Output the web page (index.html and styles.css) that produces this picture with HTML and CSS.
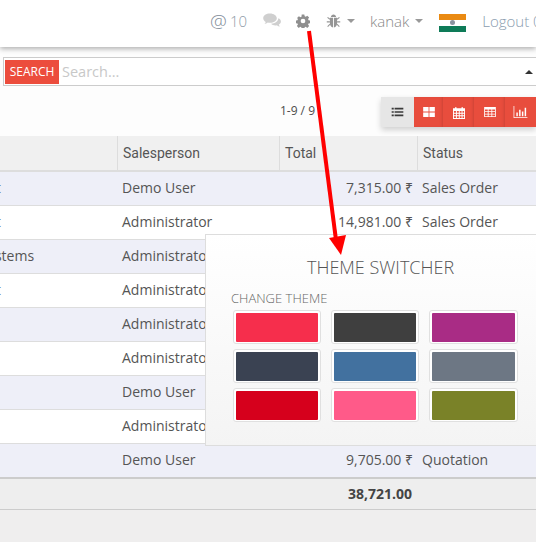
FILE: index.html
```html
<!DOCTYPE html>
<html lang="en">
<head>
<meta charset="utf-8">
<title>Sales Orders</title>
<link rel="stylesheet" href="styles.css">
</head>
<body>
<header class="topbar">
  <span class="at">@</span><span class="count">10</span>
  <svg class="ico ico-comments" viewBox="0 0 18 15"><path d="M7 0.5C3.2 0.5 0.2 2.6 0.2 5.2c0 1.5 1 2.8 2.5 3.7-.2.9-.7 1.6-1.3 2.2 1.3-.2 2.5-.8 3.4-1.5.7.1 1.4.2 2.2.2 3.8 0 6.8-2.1 6.8-4.6S10.800.5 7 .5z"/><path d="M15.300 5.300c.1 3-3.200 5.400-7.200 5.500.9 1 2.500 1.600 4.300 1.600.5 0 1-.1 1.500-.2.800.7 1.800 1.200 3 1.400-.5-.6-.9-1.200-1.100-2 1.300-.8 2.100-1.900 2.100-3.100 0-1.500-1-2.600-2.600-3.200z"/></svg>
  <svg class="ico ico-gear" viewBox="0 0 16 16"><path fill-rule="evenodd" d="M6.500.5h3l.4 2.100 1.200.5 1.800-1.200 2.100 2.100-1.200 1.800.5 1.200 2.100.4v3l-2.100.4-.5 1.200 1.200 1.800-2.100 2.100-1.800-1.200-1.200.5-.4 2.100h-3l-.4-2.100-1.200-.5-1.800 1.200-2.100-2.100 1.200-1.800-.5-1.200-2.100-.4v-3l2.100-.4.5-1.200L1.200 4.600l2.100-2.100 1.800 1.200 1.200-.5zM8 5.300a2.700 2.700 0 1 0 0 5.400 2.700 2.700 0 0 0 0-5.400z"/></svg>
  <svg class="ico ico-bug" viewBox="0 0 17 16"><path d="M5.500 3.300C5.700 1.700 7 .6 8.500.6s2.800 1.100 3 2.700zM4.400 4.200h3.600V15.400C5.700 15.100 4.400 13 4.400 10.500zM9 4.200h3.600v6.300c0 2.500-1.300 4.600-3.600 4.900z"/><path class="bug-legs" d="M4.400 6 1.700 3.800M12.600 6l2.700-2.200M4.400 9H.8M12.600 9h3.600M4.600 11.500 1.800 14.300M12.400 11.500l2.800 2.800"/></svg>
  <span class="caret caret-bug"></span>
  <span class="user">kanak</span>
  <span class="caret caret-user"></span>
  <span class="flag"><span class="flag-saffron"></span><span class="flag-white"><span class="chakra"></span></span><span class="flag-green"></span></span>
  <span class="logout">Logout 0</span>
</header>

<div class="workbar">
  <section class="searchbox">
    <span class="facet">SEARCH</span>
    <span class="placeholder">Search...</span>
    <span class="caret-up"></span>
  </section>

  <section class="controls">
    <span class="pager">1-9 / 9</span>
    <div class="views">
      <button class="view view-active"><svg class="vico vico-list" viewBox="0 0 14 12"><path class="list-dark" d="M0 1h2.500v2H0zM0 5h2.500v2H0zM0 9h2.500v2H0zM3.500 1H14v2H3.500zM3.500 5H14v2H3.500zM3.500 9H14v2H3.500z"/></svg></button>
      <button class="view view-kanban"><svg class="vico" viewBox="0 0 14 12"><path d="M0 0h6.500v5.500H0zM7.500 0H14v5.500H7.500zM0 6.500h6.500V12H0zM7.500 6.500H14V12H7.500z"/></svg></button>
      <button class="view view-cal"><svg class="vico vico-cal" viewBox="0 0 13 14"><path fill-rule="evenodd" d="M0 2.500h2.200V1.200h1.600v1.300h5.400V1.200h1.600v1.300H13V14H0zM1 5.500v1.800h2.200V5.500zm3.200 0v1.800h2.100V5.500zm3.100 0v1.800h2V5.500zm3 0v1.800H12V5.500zM1 8.300v1.800h2.200V8.300zm3.200 0v1.800h2.100V8.300zm3.100 0v1.800h2V8.300zm3 0v1.800H12V8.300zM1 11.100V13h2.200v-1.900zm3.200 0V13h2.100v-1.900zm3.100 0V13h2v-1.900zm3 0V13H12v-1.900z"/></svg></button>
      <button class="view view-grid"><svg class="vico vico-grid" viewBox="0 0 14 12"><path fill-rule="evenodd" d="M0 0h14v12H0zM1 3v2h3.300V3zm4.300 0v2h3.400V3zm4.400 0v2H13V3zM1 6v2h3.300V6zm4.300 0v2h3.400V6zm4.400 0v2H13V6zM1 9v2h3.300V9zm4.300 0v2h3.400V9zm4.400 0v2H13V9z"/></svg></button>
      <button class="view view-chart"><svg class="vico vico-chart" viewBox="0 0 15 13"><path d="M0 0h.8v12.200H15v.8H0zM3 7h1.600v4.200H3zM6 4h1.600v7.200H6zM9 6h1.600v5.200H9zM12 2h1.600v9.200H12z"/></svg></button>
    </div>
  </section>
</div>

<table class="orders">
  <colgroup><col class="c-cust"><col class="c-sales"><col class="c-total"><col class="c-status"></colgroup>
  <thead>
    <tr><th></th><th>Salesperson</th><th>Total</th><th>Status</th></tr>
  </thead>
  <tbody>
    <tr><td class="cust">China Export</td><td>Demo User</td><td class="num">7,315.00 ₹</td><td>Sales Order</td></tr>
    <tr><td class="cust">China Export</td><td>Administrator</td><td class="num">14,981.00 ₹</td><td>Sales Order</td></tr>
    <tr><td class="cust">Think Big Systems</td><td>Administrator</td><td class="num"></td><td></td></tr>
    <tr><td class="cust">China Export</td><td>Administrator</td><td class="num"></td><td></td></tr>
    <tr><td class="cust"></td><td>Administrator</td><td class="num"></td><td></td></tr>
    <tr><td class="cust"></td><td>Administrator</td><td class="num"></td><td></td></tr>
    <tr><td class="cust"></td><td>Demo User</td><td class="num"></td><td></td></tr>
    <tr><td class="cust"></td><td>Administrator</td><td class="num"></td><td></td></tr>
    <tr class="last"><td class="cust"></td><td>Demo User</td><td class="num">9,705.00 ₹</td><td>Quotation</td></tr>
  </tbody>
  <tfoot>
    <tr><td></td><td></td><td class="num sum">38,721.00</td><td></td></tr>
  </tfoot>
</table>

<aside class="switcher">
  <h2 class="switcher-title">THEME SWITCHER</h2>
  <h3 class="switcher-label">CHANGE THEME</h3>
  <div class="swatches">
    <span class="swatch"><span class="fill t-rose"></span></span>
    <span class="swatch"><span class="fill t-charcoal"></span></span>
    <span class="swatch"><span class="fill t-purple"></span></span>
    <span class="swatch"><span class="fill t-slate"></span></span>
    <span class="swatch"><span class="fill t-blue"></span></span>
    <span class="swatch"><span class="fill t-grey"></span></span>
    <span class="swatch"><span class="fill t-red"></span></span>
    <span class="swatch"><span class="fill t-pink"></span></span>
    <span class="swatch"><span class="fill t-olive"></span></span>
  </div>
</aside>

<svg class="arrow" viewBox="0 0 536 542"><path class="arrow-line" d="M309 31 336 240"/><path class="arrow-head" d="M329 238 346 235 341 255z"/></svg>
</body>
</html>
```
FILE: styles.css
```css
* { box-sizing: border-box; }
html, body { margin: 0; height: 100%; }
body {
  width: 536px;
  height: 542px;
  overflow: hidden;
  position: relative;
  background: #efeeee;
  font-family: "Open Sans", "Noto Sans", sans-serif;
  font-size: 14px;
  color: #555;
}

/* top bar */
.topbar {
  height: 47px;
  background: #fff;
  box-shadow: 0 2px 5px rgba(0,0,0,.3);
  display: flex;
  align-items: center;
  padding-left: 210px;
  padding-bottom: 6px;
  color: #999;
  white-space: nowrap;
  overflow: hidden;
  position: relative;
  z-index: 1;
}
.topbar > * { flex: none; }
.at { font-size: 19px; font-weight: 300; color: #7f8c98; width: 20px; }
.count { font-size: 15px; font-weight: 300; color: #8f9ca8; width: 33px; }
.ico { display: block; }
.ico-comments { width: 18px; height: 15px; fill: #cfcfcf; }
.ico-gear { width: 14px; height: 14px; margin-left: 15px; fill: #8f8f8f; }
.ico-bug { width: 15px; height: 14px; margin-left: 16px; fill: #959595; }
.bug-legs { fill: none; stroke: #959595; stroke-width: 1.200; }
.caret { width: 0; height: 0; border: 4px solid transparent; border-top-color: #999; border-bottom-width: 0; }
.caret-bug { margin-left: 6px; }
.caret-user { margin-left: 6px; }
.user { font-size: 15px; font-weight: 300; margin-left: 15px; color: #888; }
.flag { width: 27px; height: 18px; margin: 4px 0 0 16px; display: flex; flex-direction: column; }
.flag-saffron { height: 6px; background: #ea8a12; }
.flag-white { height: 6px; background: #fff; display: flex; justify-content: center; align-items: center; }
.chakra { width: 5px; height: 5px; border-radius: 50%; background: #8a93a0; }
.flag-green { height: 6px; background: #0e7b58; }
.logout { font-size: 15px; font-weight: 300; margin-left: 16px; color: #8a9cae; }

/* search and controls band */
.workbar { height: 89px; padding-top: 10px; background: #fdfdfd; }
.searchbox {
  margin-left: 3px;
  height: 29px;
  width: 540px;
  border: 1px solid #ccc;
  background: #fff;
  display: flex;
  align-items: center;
  padding-left: 1px;
}
.facet {
  width: 54px; height: 24px;
  background: #ec4d3d;
  color: #fff;
  font-size: 12px;
  display: flex; align-items: center; justify-content: center;
}
.placeholder { margin-left: 3px; color: #c8c8c8; font-size: 14.500px; }
.caret-up {
  margin-left: auto; margin-right: 9px;
  width: 0; height: 0;
  border: 4.500px solid transparent;
  border-bottom-color: #333;
  border-top-width: 0;
}

/* pager + view buttons */
.controls {
  margin-top: 11px;
  height: 30px;
  display: flex;
  align-items: center;
  justify-content: flex-end;
}
.pager { font-size: 12px; color: #4c4c4c; margin: 0 66px 3px 0; }
.views { display: flex; height: 30px; box-shadow: 0 3px 6px rgba(0,0,0,.18); width: 155px; flex: none; }
.view { border: 0; padding: 0; margin: 0; display: flex; align-items: center; justify-content: center; background: #e84d3d; flex: none; height: 30px; box-shadow: inset -2px 0 3px -1px rgba(0,0,0,.12); }
.view-active { width: 33px; background: #e6e6e6; box-shadow: none; }
.view-kanban { width: 29px; }
.view-cal { width: 31px; }
.view-grid { width: 31px; }
.view-chart { width: 31px; box-shadow: none; }
.vico { width: 12px; height: 10px; fill: #fff; display: block; }
.vico-list { width: 13px; }
.vico-cal { height: 13px; }
.vico-grid { width: 12px; }
.vico-chart { width: 15px; height: 12px; }
.list-dark { fill: #3a3a3a; }

/* table */
.orders {
  width: 756px;
  margin-left: -220px;
  table-layout: fixed;
  border-collapse: separate;
  border-spacing: 0;
  background: #fff;
}
.c-cust { width: 337px; }
.c-sales { width: 162px; }
.c-total { width: 138px; }
.c-status { width: 119px; }
.orders th {
  height: 36px;
  background: #f0f0f0;
  font-family: Roboto, sans-serif;
  font-weight: 400;
  font-size: 14px;
  text-align: left;
  padding: 0 5px;
  border-bottom: 2px solid #ddd;
  border-left: 1px solid #ddd;
  color: #555;
}
.orders th:first-child { border-left: 0; }
.orders td {
  height: 34px;
  padding: 0 5px 2px;
  border-bottom: 1px solid #ddd;
  white-space: nowrap;
  overflow: hidden;
}
.orders tbody tr:nth-child(odd) { background: #eeeff8; }
.orders tbody tr.last td { height: 33px; border-bottom: 0; }
.orders td.cust { padding-left: 137px; }
.orders td.num { text-align: right; padding-right: 4px; }
.orders td.num.sum { padding-right: 5px; font-weight: 700; color: #444; }
.orders tfoot tr { background: #eee; }
.orders tfoot td { height: 33px; border-top: 2px solid #ccc; border-bottom: 1px solid #ccc; }

/* theme switcher */
.switcher {
  position: absolute;
  left: 205px;
  top: 234px;
  width: 340px;
  height: 212px;
  background: linear-gradient(#fff, #f4f4f4);
  border: 1px solid #ddd;
  padding-left: 25px;
  z-index: 2;
}
.switcher-title {
  margin: 21px 0 0 76px;
  font-size: 18px;
  line-height: 23px;
  font-weight: 300;
  color: #555;
}
.switcher-label {
  margin: 11px 0 0;
  font-size: 13px;
  line-height: 16px;
  font-weight: 300;
  color: #666;
}
.swatches {
  margin: 4px 0 0 2px;
  display: grid;
  grid-template-columns: 88px 88px 89px;
  grid-auto-rows: 34px;
  column-gap: 10px;
  row-gap: 5px;
}
.swatch {
  border: 1px solid #e0e0e0;
  border-radius: 3px;
  background: #fff;
  padding: 2px 1px 1px;
  display: flex;
}
.fill { flex: 1; border-radius: 1px; margin: 0 1px; }
.t-rose { background: #f62e4c; }
.t-charcoal { background: #3f3f3f; }
.t-purple { background: #a92c85; }
.t-slate { background: #3a4252; }
.t-blue { background: #42719f; }
.t-grey { background: #6d7784; }
.t-red { background: #d6001c; }
.t-pink { background: #ff5a89; }
.t-olive { background: #7a8228; }

/* annotation arrow */
.arrow { position: absolute; left: 0; top: 0; width: 536px; height: 542px; z-index: 3; pointer-events: none; }
.arrow-line { stroke: #f00; stroke-width: 4; fill: none; }
.arrow-head { fill: #f00; }
```
